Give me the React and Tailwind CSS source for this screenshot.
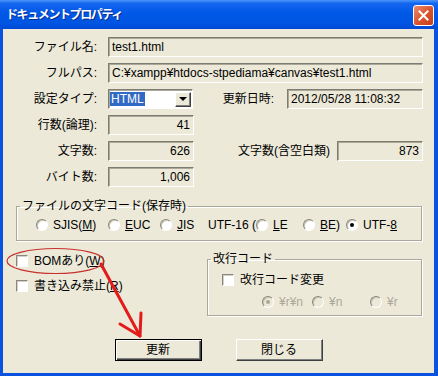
const sunken =
  'border border-t-[#7f7d72] border-l-[#7f7d72] border-r-white border-b-white shadow-[inset_1px_1px_0_#aca899]';
const raised =
  'border border-t-white border-l-white border-r-[#404040] border-b-[#404040] shadow-[inset_-1px_-1px_0_#808080]';

function Radio({ checked, disabled }) {
  return (
    <span
      className={`flex h-[12px] w-[12px] shrink-0 items-center justify-center rounded-full border border-t-[#8a877a] border-l-[#8a877a] border-r-white border-b-white shadow-[inset_1px_1px_0_#c9c6b8] ${
        disabled ? 'bg-[#ece9d8]' : 'bg-white'
      }`}
    >
      {checked && (
        <span className={`h-[4px] w-[4px] rounded-full ${disabled ? 'bg-[#aca899]' : 'bg-black'}`} />
      )}
    </span>
  );
}

function Check({ children }) {
  return (
    <div className="flex h-[14px] items-center gap-[6px]">
      <span className="h-[12px] w-[12px] shrink-0 border border-t-[#8a877a] border-l-[#8a877a] border-r-white border-b-white bg-white shadow-[inset_1px_1px_0_#d4d0c8]" />
      <span className="whitespace-nowrap">{children}</span>
    </div>
  );
}

function Opt({ w, checked, disabled, children }) {
  return (
    <div className={`flex items-center gap-[5px] ${w}`}>
      <Radio checked={checked} disabled={disabled} />
      <span className={`whitespace-nowrap ${disabled ? 'text-[#aca899]' : ''}`}>{children}</span>
    </div>
  );
}

function Label({ w, children }) {
  return <div className={`${w} shrink-0 whitespace-nowrap text-right`}>{children}</div>;
}

export default function App() {
  return (
    <div className="relative flex h-[376px] w-[438px] flex-col bg-[#0a52e0] font-['Liberation_Sans','Noto_Sans_CJK_JP',sans-serif] text-black">
      {/* title bar */}
      <div className="flex h-[29px] shrink-0 items-center bg-[linear-gradient(to_bottom,#4a96fb_0%,#1466ee_12%,#0058e6_45%,#0055e2_80%,#0048d4_100%)] pl-[6px] pr-[4px]">
        <span className="text-[12px] font-bold tracking-[-1.4px] text-white [text-shadow:1px_1px_0_#0a2a8c]">
          ドキュメントプロパティ
        </span>
        <div className="ml-auto mt-[1px] flex h-[21px] w-[21px] items-center justify-center rounded-[3px] border border-white bg-[linear-gradient(to_bottom_right,#eb8a6c,#d9522b_55%,#c2401c)]">
          <svg width="11" height="11" viewBox="0 0 11 11">
            <path d="M1.5 1.5 L9.5 9.5 M9.5 1.5 L1.5 9.5" stroke="white" strokeWidth="2" strokeLinecap="square" />
          </svg>
        </div>
      </div>

      {/* client area */}
      <div className="mb-[3px] ml-[3px] mr-[4px] flex flex-1 flex-col bg-[#ece9d8] pt-[8px] text-[12px] leading-[14px]">
        <div className="flex flex-col gap-[6px] pr-[11px]">
          <div className="flex h-[20px] items-center">
            <Label w="w-[94px]">ファイル名:</Label>
            <div className={`ml-[11px] flex h-full flex-1 items-center px-[3px] ${sunken}`}>test1.html</div>
          </div>
          <div className="flex h-[20px] items-center">
            <Label w="w-[94px]">フルパス:</Label>
            <div className={`ml-[11px] flex h-full flex-1 items-center px-[3px] ${sunken}`}>
              C:¥xampp¥htdocs-stpediama¥canvas¥test1.html
            </div>
          </div>
          <div className="flex h-[20px] items-center">
            <Label w="w-[94px]">設定タイプ:</Label>
            <div className={`ml-[11px] flex h-full w-[85px] items-center bg-white pl-[1px] pr-[1px] ${sunken}`}>
              <span className="bg-[#316ac5] px-[1px] text-white">HTML</span>
              <span className={`ml-auto flex h-[15px] w-[16px] items-center justify-center bg-[#ece9d8] ${raised}`}>
                <span className="h-0 w-0 border-x-[4px] border-t-[4px] border-x-transparent border-t-black" />
              </span>
            </div>
            <Label w="w-[81px]">更新日時:</Label>
            <div className={`ml-[13px] flex h-full flex-1 items-center px-[3px] ${sunken}`}>2012/05/28 11:08:32</div>
          </div>
          <div className="flex h-[20px] items-center">
            <Label w="w-[94px]">行数(論理):</Label>
            <div className={`ml-[11px] flex h-full w-[86px] items-center justify-end px-[3px] ${sunken}`}>41</div>
          </div>
          <div className="flex h-[20px] items-center">
            <Label w="w-[94px]">文字数:</Label>
            <div className={`ml-[11px] flex h-full w-[86px] items-center justify-end px-[3px] ${sunken}`}>626</div>
            <Label w="w-[136px]">文字数(含空白類)</Label>
            <div className={`ml-[7px] flex h-full flex-1 items-center justify-end px-[3px] ${sunken}`}>873</div>
          </div>
          <div className="flex h-[20px] items-center">
            <Label w="w-[94px]">バイト数:</Label>
            <div className={`ml-[11px] flex h-full w-[86px] items-center justify-end px-[3px] ${sunken}`}>1,006</div>
          </div>
        </div>

        {/* encoding group */}
        <fieldset className="ml-[13px] mr-[12px] mt-[12px] border border-[#aca899] pb-[8px] shadow-[inset_1px_1px_0_#fff,1px_1px_0_#fff]">
          <legend className="ml-[3px] px-[2px] leading-[14px]">ファイルの文字コード(保存時)</legend>
          <div className="mt-[5px] flex h-[14px] items-center pl-[19px]">
            <Opt w="w-[72px]">
              SJIS(<u>M</u>)
            </Opt>
            <Opt w="w-[52px]">
              <u>E</u>UC
            </Opt>
            <Opt w="w-[48px]">
              <u>J</u>IS
            </Opt>
            <span className="w-[48px] whitespace-nowrap">UTF-16 (</span>
            <Opt w="w-[47px]">
              <u>L</u>E
            </Opt>
            <Opt w="w-[43px]">
              <u>B</u>E)
            </Opt>
            <Opt checked>
              UTF-<u>8</u>
            </Opt>
          </div>
        </fieldset>

        {/* lower section */}
        <div className="mt-[11px] flex pl-[13px] pr-[12px]">
          <div className="flex w-[191px] flex-col gap-[11px] pt-[2px]">
            <Check>
              BOMあり(<u>W</u>)
            </Check>
            <Check>
              書き込み禁止(<u>R</u>)
            </Check>
          </div>
          <fieldset className="flex-1 border border-[#aca899] pb-[6px] shadow-[inset_1px_1px_0_#fff,1px_1px_0_#fff]">
            <legend className="ml-[3px] px-[2px] leading-[14px]">改行コード</legend>
            <div className="mt-[7px] pl-[14px]">
              <Check>改行コード変更</Check>
            </div>
            <div className="mt-[8px] flex h-[14px] items-center pl-[54px]">
              <Opt w="w-[50px]" checked disabled>
                ¥r¥n
              </Opt>
              <Opt w="w-[58px]" disabled>
                ¥n
              </Opt>
              <Opt disabled>¥r</Opt>
            </div>
          </fieldset>
        </div>

        {/* buttons */}
        <div className="mt-[23px] flex justify-center gap-[34px]">
          <div className="flex h-[22px] w-[87px] items-center justify-center border border-black bg-[#ece9d8] shadow-[inset_1px_1px_0_#fff,inset_-1px_-1px_0_#404040,inset_-2px_-2px_0_#808080]">
            更新
          </div>
          <div className={`flex h-[22px] w-[87px] items-center justify-center bg-[#ece9d8] ${raised}`}>閉じる</div>
        </div>
      </div>

      {/* red annotation */}
      <svg className="pointer-events-none absolute left-0 top-0" width="438" height="376">
        <ellipse cx="55.5" cy="261" rx="48.5" ry="12.5" fill="none" stroke="#c8302c" strokeWidth="1.2" />
        <line x1="101" y1="264" x2="140" y2="336" stroke="#e31b1b" strokeWidth="3" strokeLinecap="round" />
        <polyline
          points="120,324 140,336 141,313"
          fill="none"
          stroke="#e31b1b"
          strokeWidth="3"
          strokeLinecap="round"
          strokeLinejoin="round"
        />
      </svg>
    </div>
  );
}
